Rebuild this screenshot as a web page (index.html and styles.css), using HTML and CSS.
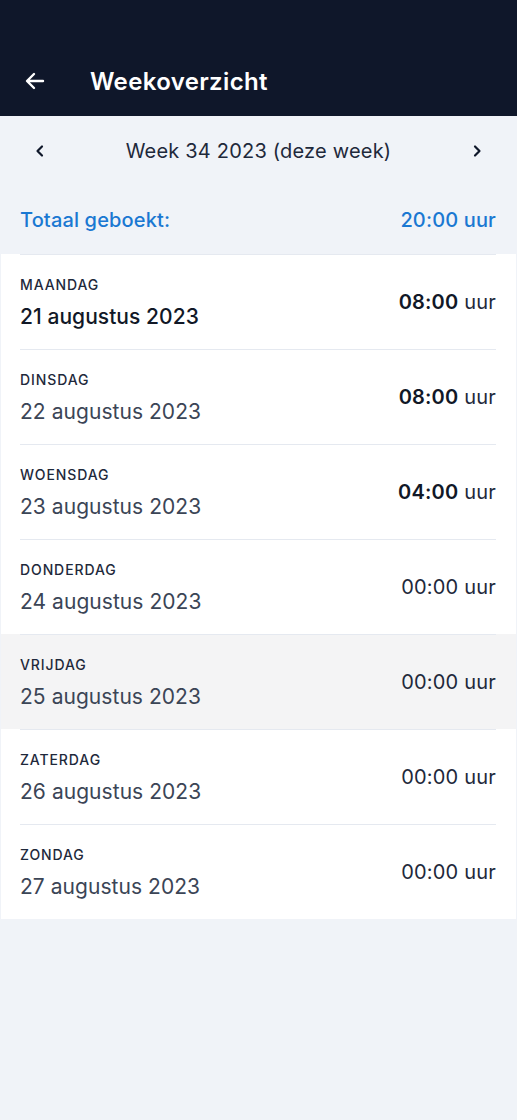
FILE: index.html
```html
<!DOCTYPE html>
<html lang="nl">
<head>
<meta charset="utf-8">
<title>Weekoverzicht</title>
<link rel="stylesheet" href="styles.css">
</head>
<body>
<header class="topbar">
  <div class="topbar-row">
    <svg class="back" width="24" height="24" viewBox="0 0 24 24" fill="none" stroke="#fff" stroke-width="2.4" stroke-linecap="round" stroke-linejoin="round"><path d="M20 12H4.5M11 5l-7 7 7 7"/></svg>
    <h1 class="title">Weekoverzicht</h1>
  </div>
</header>
<div class="weeknav">
  <svg class="chev" width="14" height="14" viewBox="0 0 14 14" fill="none" stroke="#0f172a" stroke-width="2.2" stroke-linecap="round" stroke-linejoin="round"><path d="M9 2.5L4.5 7 9 11.5"/></svg>
  <span class="weeklabel">Week 34 2023 (deze week)</span>
  <svg class="chev" width="14" height="14" viewBox="0 0 14 14" fill="none" stroke="#0f172a" stroke-width="2.2" stroke-linecap="round" stroke-linejoin="round"><path d="M5 2.5L9.5 7 5 11.5"/></svg>
</div>
<div class="total">
  <span>Totaal geboekt:</span>
  <span>20:00 uur</span>
</div>
<ul class="days">
  <li class="day"><div class="day-inner"><div class="dinfo"><div class="dname">MAANDAG</div><div class="ddate strong">21 augustus 2023</div></div><div class="dtime"><b>08:00</b> uur</div></div></li>
  <li class="day"><div class="day-inner"><div class="dinfo"><div class="dname">DINSDAG</div><div class="ddate">22 augustus 2023</div></div><div class="dtime"><b>08:00</b> uur</div></div></li>
  <li class="day"><div class="day-inner"><div class="dinfo"><div class="dname">WOENSDAG</div><div class="ddate">23 augustus 2023</div></div><div class="dtime"><b>04:00</b> uur</div></div></li>
  <li class="day"><div class="day-inner"><div class="dinfo"><div class="dname">DONDERDAG</div><div class="ddate">24 augustus 2023</div></div><div class="dtime">00:00 uur</div></div></li>
  <li class="day active"><div class="day-inner"><div class="dinfo"><div class="dname">VRIJDAG</div><div class="ddate">25 augustus 2023</div></div><div class="dtime">00:00 uur</div></div></li>
  <li class="day"><div class="day-inner"><div class="dinfo"><div class="dname">ZATERDAG</div><div class="ddate">26 augustus 2023</div></div><div class="dtime">00:00 uur</div></div></li>
  <li class="day"><div class="day-inner"><div class="dinfo"><div class="dname">ZONDAG</div><div class="ddate">27 augustus 2023</div></div><div class="dtime">00:00 uur</div></div></li>
</ul>
</body>
</html>
```
FILE: styles.css
```css
* { box-sizing: border-box; }
html, body { margin: 0; padding: 0; }
body {
  background: #f0f3f8;
  font-family: Inter, "Noto Sans", sans-serif;
  color: #1e293b;
  min-height: 1120px;
}
.topbar {
  background: #0f172a;
  height: 116px;
  display: flex;
  align-items: flex-end;
}
.topbar-row {
  height: 70px;
  width: 100%;
  display: flex;
  align-items: center;
  padding-left: 23px;
}
.back { display: block; }
.title {
  margin: 0 0 0 43px;
  color: #fff;
  font-size: 24px;
  font-weight: 600;
  letter-spacing: 0.35px;
}
.weeknav {
  height: 70px;
  display: flex;
  align-items: center;
  justify-content: space-between;
  padding: 0 33px 0 33px;
}
.weeklabel {
  font-size: 20px;
  color: #1e293b;
  letter-spacing: 0.2px;
}
.total {
  height: 68px;
  display: flex;
  align-items: center;
  justify-content: space-between;
  padding: 0 21px 0 20px;
  color: #1a78d2;
  font-size: 20px;
  font-weight: 500;
  letter-spacing: 0.15px;
}
.days {
  list-style: none;
  margin: 0 1px;
  padding: 0;
  background: #fff;
}
.day { padding: 0 20px 0 19px; }
.day.active { background: #f4f4f5; }
.day-inner {
  height: 95px;
  border-top: 1px solid #e5e9f0;
  display: flex;
  align-items: center;
  justify-content: space-between;
}
.dinfo { margin-bottom: 1px; }
.dname {
  font-size: 14px;
  font-weight: 500;
  letter-spacing: 0.9px;
  color: #1e293b;
  line-height: 20px;
}
.ddate {
  font-size: 21px;
  color: #3b4556;
  margin-top: 10px;
  line-height: 24px;
  letter-spacing: 0.05px;
}
.ddate.strong { color: #111827; font-weight: 500; }
.dtime {
  font-size: 20px;
  color: #1e293b;
  letter-spacing: 0.2px;
}
.dtime b { font-weight: 600; color: #111827; }
```
